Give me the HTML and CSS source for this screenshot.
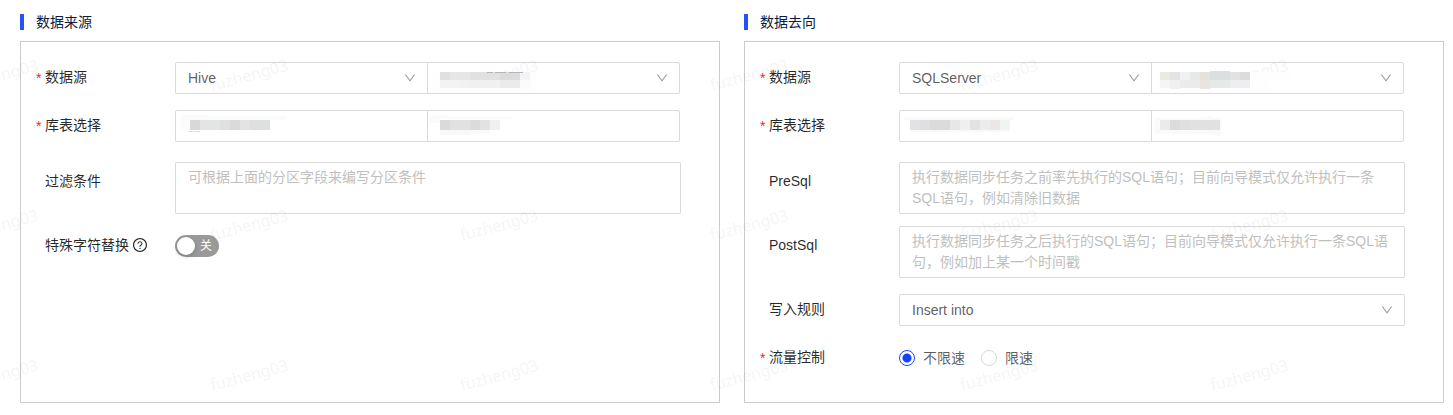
FILE: index.html
```html
<!DOCTYPE html>
<html lang="zh-CN">
<head>
    <meta charset="UTF-8">
    <meta name="viewport" content="width=device-width, initial-scale=1.0">
    <title>数据同步</title>
    <link rel="stylesheet" href="styles.css">
</head>
<body>
    <svg class="defs" width="0" height="0" aria-hidden="true">
        <symbol id="icon-down" viewBox="64 64 896 896">
            <path d="M884 256h-75c-5.1 0-9.9 2.5-12.9 6.6L512 654.2 227.9 262.6c-3-4.1-7.8-6.6-12.9-6.6h-75c-6.5 0-10.3 7.4-6.5 12.7l352.6 486.1c12.8 17.6 39 17.6 51.7 0l352.6-486.1c3.9-5.3.1-12.7-6.4-12.7z"/>
        </symbol>
    </svg>

    <form class="container">
        <section class="column">
            <h2 class="title">数据来源</h2>
            <div class="panel">
                <div class="row">
                    <label class="label required" for="sourceType">数据源</label>
                    <div class="control group">
                        <div class="field">
                            <select id="sourceType"><option>Hive</option></select>
                            <svg class="arrow"><use href="#icon-down"/></svg>
                        </div>
                        <div class="field">
                            <select aria-label="数据源名称"><option></option></select>
                            <svg class="arrow"><use href="#icon-down"/></svg>
                            <svg class="mask" width="120" height="30">
                                <rect x="5" y="10" width="104" height="19" fill="#fefefe"/>
                                <rect x="13" y="10" width="10" height="8" fill="#e0e0e0"/>
                                <rect x="23" y="10" width="20" height="8" fill="#e6e6e6"/>
                                <rect x="43" y="10" width="10" height="8" fill="#dfe1e3"/>
                                <rect x="53" y="10" width="20" height="8" fill="#e3e1e0"/>
                                <rect x="73" y="10" width="20" height="8" fill="#dcdbdb"/>
                                <rect x="93" y="10" width="10" height="8" fill="#f4f4f8"/>
                                <rect x="13" y="18" width="20" height="8" fill="#f3f3f3"/>
                                <rect x="33" y="18" width="10" height="8" fill="#f3f0ef"/>
                                <rect x="43" y="18" width="30" height="8" fill="#f0f0f0"/>
                                <rect x="73" y="18" width="20" height="8" fill="#ebebeb"/>
                                <rect x="93" y="18" width="10" height="9" fill="#fbfbfb"/>
                                <path d="M60 10h6M68 10h11M82 10h14" stroke="#b5b5b8"/>
                            </svg>
                        </div>
                    </div>
                </div>
                <div class="row">
                    <label class="label required" for="sourceDb">库表选择</label>
                    <div class="control group">
                        <div class="field">
                            <input type="text" id="sourceDb">
                            <svg class="mask" width="120" height="30">
                                <path d="M6 5h30v1h76v4H95v10H6z" fill="#fbfbfb"/>
                                <rect x="15" y="10" width="10" height="10" fill="#d8d8d8"/>
                                <rect x="25" y="10" width="20" height="10" fill="#e3e4e4"/>
                                <rect x="45" y="10" width="10" height="10" fill="#dfe0e0"/>
                                <rect x="55" y="10" width="10" height="10" fill="#dadada"/>
                                <rect x="65" y="10" width="10" height="10" fill="#e3e3e4"/>
                                <rect x="75" y="10" width="20" height="10" fill="#dedfdf"/>
                                <path d="M14 21h4M19 21h6" stroke="#dcdcdc"/>
                            </svg>
                        </div>
                        <div class="field">
                            <input type="text" aria-label="表名">
                            <svg class="mask" width="120" height="30">
                                <path d="M3 7l6-2h8l6 2h62v2H13v4H3z" fill="#fbfbfb"/>
                                <rect x="13" y="10" width="10" height="10" fill="#dadada"/>
                                <rect x="23" y="10" width="20" height="10" fill="#e1e1e1"/>
                                <rect x="43" y="10" width="10" height="10" fill="#d9dbdd"/>
                                <rect x="53" y="10" width="10" height="10" fill="#e2e2e2"/>
                                <rect x="63" y="10" width="10" height="10" fill="#eff1f1"/>
                                <rect x="13" y="20" width="30" height="5" fill="#f8f8f8"/>
                                <rect x="43" y="20" width="20" height="4" fill="#fafafa"/>
                            </svg>
                        </div>
                    </div>
                </div>
                <div class="row row-tall">
                    <label class="label" for="filter">过滤条件</label>
                    <div class="control">
                        <textarea id="filter" rows="2" placeholder="可根据上面的分区字段来编写分区条件"></textarea>
                    </div>
                </div>
                <div class="row row-tall">
                    <label class="label" for="replaceChars">特殊字符替换
                        <svg class="help" viewBox="64 64 896 896">
                            <path d="M512 64C264.6 64 64 264.6 64 512s200.6 448 448 448 448-200.6 448-448S759.4 64 512 64zm0 820c-205.4 0-372-166.6-372-372s166.6-372 372-372 372 166.6 372 372-166.6 372-372 372z"/>
                            <path d="M623.6 316.7C593.6 290.4 554 276 512 276s-81.6 14.5-111.6 40.7C369.2 344 352 380.7 352 420v7.6c0 4.4 3.6 8 8 8h48c4.4 0 8-3.6 8-8V420c0-44.1 43.1-80 96-80s96 35.9 96 80c0 31.1-22 59.6-56.1 72.7-21.2 8.1-39.2 22.3-52.1 40.9-13.1 19-19.9 41.8-19.9 64.9V620c0 4.4 3.6 8 8 8h48c4.4 0 8-3.6 8-8v-22.7a48.3 48.3 0 0130.9-44.8c59-22.7 97.1-74.7 97.1-132.5.1-39.3-17.1-76-48.3-103.3zM472 732a40 40 0 1080 0 40 40 0 10-80 0z"/>
                        </svg>
                    </label>
                    <div class="control switch-wrap">
                        <button type="button" class="switch" id="replaceChars" role="switch" aria-checked="false"><span class="knob"></span>关</button>
                    </div>
                </div>
            </div>
        </section>

        <section class="column">
            <h2 class="title">数据去向</h2>
            <div class="panel">
                <div class="row">
                    <label class="label required" for="targetType">数据源</label>
                    <div class="control group">
                        <div class="field">
                            <select id="targetType"><option>SQLServer</option></select>
                            <svg class="arrow"><use href="#icon-down"/></svg>
                        </div>
                        <div class="field">
                            <select aria-label="数据源名称"><option></option></select>
                            <svg class="arrow"><use href="#icon-down"/></svg>
                            <svg class="mask" width="145" height="30">
                                <rect x="5" y="10" width="134" height="8" fill="#fefefe"/>
                                <rect x="5" y="18" width="114" height="11" fill="#fefefe"/>
                                <rect x="9" y="10" width="10" height="8" fill="#ebe9e3"/>
                                <rect x="19" y="10" width="10" height="8" fill="#e1e4e3"/>
                                <rect x="29" y="10" width="10" height="8" fill="#f0f1f4"/>
                                <rect x="39" y="10" width="10" height="8" fill="#e7e9e9"/>
                                <rect x="49" y="10" width="10" height="8" fill="#e6e1d9"/>
                                <rect x="59" y="9" width="20" height="9" fill="#dadfdf"/>
                                <rect x="79" y="10" width="10" height="8" fill="#e3e1e1"/>
                                <rect x="89" y="10" width="10" height="8" fill="#dcdce0"/>
                                <rect x="9" y="18" width="10" height="8" fill="#f5f5f5"/>
                                <rect x="19" y="18" width="10" height="9" fill="#edf0ef"/>
                                <rect x="29" y="18" width="20" height="8" fill="#ebebeb"/>
                                <rect x="49" y="18" width="10" height="9" fill="#e9e4df"/>
                                <rect x="59" y="18" width="20" height="8" fill="#e5e9e8"/>
                                <rect x="79" y="18" width="20" height="8" fill="#eeeef0"/>
                            </svg>
                        </div>
                    </div>
                </div>
                <div class="row">
                    <label class="label required" for="targetDb">库表选择</label>
                    <div class="control group">
                        <div class="field">
                            <input type="text" id="targetDb">
                            <svg class="mask" width="120" height="30">
                                <path d="M5 7h109v3h-3v12H11V10H5z" fill="#f9f9f9"/>
                                <rect x="11" y="10" width="10" height="10" fill="#e3e2e2"/>
                                <rect x="21" y="10" width="10" height="10" fill="#dedfe2"/>
                                <rect x="31" y="10" width="20" height="10" fill="#dcdbdb"/>
                                <rect x="51" y="10" width="10" height="10" fill="#e6e7e9"/>
                                <rect x="61" y="10" width="10" height="10" fill="#efeff0"/>
                                <rect x="71" y="10" width="10" height="10" fill="#e5e3e2"/>
                                <rect x="81" y="10" width="10" height="10" fill="#ebecee"/>
                                <rect x="91" y="10" width="10" height="10" fill="#eae7e5"/>
                                <rect x="101" y="10" width="10" height="10" fill="#f2f3f3"/>
                            </svg>
                        </div>
                        <div class="field">
                            <input type="text" aria-label="表名">
                            <svg class="mask" width="120" height="30">
                                <path d="M4 8h48l6-2 7 2h5v19l-10-3H4z" fill="#fafafa"/>
                                <rect x="9" y="10" width="10" height="10" fill="#ebebec"/>
                                <rect x="19" y="10" width="10" height="10" fill="#dcdcdc"/>
                                <rect x="29" y="10" width="10" height="10" fill="#dfdfdf"/>
                                <rect x="39" y="10" width="30" height="10" fill="#e1e1e1"/>
                            </svg>
                        </div>
                    </div>
                </div>
                <div class="row row-tall">
                    <label class="label" for="preSql">PreSql</label>
                    <div class="control">
                        <textarea id="preSql" rows="2" placeholder="执行数据同步任务之前率先执行的SQL语句；目前向导模式仅允许执行一条SQL语句，例如清除旧数据"></textarea>
                    </div>
                </div>
                <div class="row row-tall">
                    <label class="label" for="postSql">PostSql</label>
                    <div class="control">
                        <textarea id="postSql" rows="2" placeholder="执行数据同步任务之后执行的SQL语句；目前向导模式仅允许执行一条SQL语句，例如加上某一个时间戳"></textarea>
                    </div>
                </div>
                <div class="row">
                    <label class="label" for="writeRule">写入规则</label>
                    <div class="control field">
                        <select id="writeRule"><option>Insert into</option></select>
                        <svg class="arrow"><use href="#icon-down"/></svg>
                    </div>
                </div>
                <div class="row">
                    <span class="label required" id="limitLabel">流量控制</span>
                    <div class="control radios" role="radiogroup" aria-labelledby="limitLabel">
                        <label class="radio"><input type="radio" name="limit" checked>不限速</label>
                        <label class="radio"><input type="radio" name="limit">限速</label>
                    </div>
                </div>
            </div>
        </section>
    </form>

    <svg class="watermark" aria-hidden="true">
        <pattern id="mark" x="200" y="50" width="250" height="150" patternUnits="userSpaceOnUse">
            <text x="12" y="41" transform="rotate(-15 12 41)">fuzheng03</text>
        </pattern>
        <rect width="100%" height="100%" fill="url(#mark)"/>
    </svg>
</body>
</html>
```
FILE: styles.css
```css
* {
    box-sizing: border-box;
}
body {
    margin: 0;
    padding: 12px 9px 12px 20px;
    background: #fff;
    color: rgba(0, 0, 0, 0.85);
    font-family: "Liberation Sans", "Noto Sans CJK SC", sans-serif;
    font-size: 14px;
    line-height: 20px;
}
.defs {
    position: absolute;
}
.container {
    display: grid;
    grid-template-columns: 1fr 1fr;
    gap: 24px;
}
.column {
    display: flex;
    flex-direction: column;
}
.title {
    display: flex;
    align-items: center;
    gap: 12px;
    margin: 0 0 9px;
    color: #0b1a40;
    font-size: 14px;
    font-weight: 400;
    line-height: 20px;
}
.title::before {
    content: "";
    width: 4px;
    height: 16px;
    background: #2254f4;
}
.panel {
    flex: 1;
    padding: 20px 38px 12px 15px;
    border: 1px solid #ccc;
}

/* form rows */
.row {
    display: flex;
    margin-bottom: 16px;
}
.row-tall {
    min-height: 64px;
    margin-bottom: 0;
    padding: 4px 0 8px;
}
.row-tall + .row:not(.row-tall) {
    margin-top: 8px;
}
.label {
    display: flex;
    align-items: center;
    width: 139px;
    height: 30px;
    padding-left: 9px;
}
.row-tall .label {
    height: 38px;
}
.required {
    padding-left: 0;
}
.required::before {
    content: "*";
    width: 9px;
    padding-top: 2px;
    color: #f5222d;
}
.help {
    width: 14px;
    height: 14px;
    margin-left: 4px;
    fill: rgba(0, 0, 0, 0.85);
}
.control {
    flex: 1;
    min-width: 0;
}
.group {
    display: flex;
    padding-right: 1px;
}
.field {
    position: relative;
    flex: 1;
}
.field + .field {
    margin-left: -1px;
}

input[type="text"], select, textarea {
    display: block;
    width: 100%;
    height: 32px;
    margin: 0;
    padding: 0 12px;
    border: 1px solid #d9d9d9;
    border-radius: 2px;
    outline: none;
    background: #fff;
    color: rgba(0, 0, 0, 0.65);
    font: inherit;
}
select {
    appearance: none;
    cursor: pointer;
}
textarea {
    height: auto;
    padding: 4px 12px;
    line-height: 21px;
    resize: none;
}
textarea::placeholder {
    color: #bfbfbf;
}
.group .field:first-child > input, .group .field:first-child > select {
    border-radius: 2px 0 0 2px;
}
.group .field:last-child > input, .group .field:last-child > select {
    border-radius: 0 2px 2px 0;
}
.arrow {
    position: absolute;
    top: 10px;
    right: 12px;
    width: 12px;
    height: 12px;
    fill: rgba(0, 0, 0, 0.4);
    pointer-events: none;
}
.mask {
    position: absolute;
    top: 0;
    left: 0;
    z-index: 2;
    shape-rendering: crispEdges;
    pointer-events: none;
}

/* switch */
.switch-wrap {
    display: flex;
    align-items: center;
    height: 40px;
}
.switch {
    display: flex;
    align-items: center;
    gap: 5px;
    width: 44px;
    height: 22px;
    padding: 0 2px;
    border: none;
    border-radius: 11px;
    background: #999;
    color: #fff;
    font: inherit;
    font-size: 12px;
    cursor: pointer;
}
.knob {
    width: 18px;
    height: 18px;
    border-radius: 50%;
    background: #fff;
    box-shadow: 0 2px 4px rgba(0, 35, 11, 0.2);
}

/* radios */
.radios {
    display: flex;
    align-items: center;
    gap: 16px;
    height: 32px;
    color: rgba(0, 0, 0, 0.65);
}
.radio {
    display: flex;
    align-items: center;
    gap: 8px;
}
.radio input {
    appearance: none;
    width: 16px;
    height: 16px;
    margin: 0;
    border: 1px solid #d9d9d9;
    border-radius: 50%;
    background: #fff;
}
.radio input:checked {
    border-color: #1c49f2;
    background: radial-gradient(circle, #1440ff 4px, #fff 5px);
}

.watermark {
    position: fixed;
    top: 0;
    left: 0;
    z-index: 1;
    width: 100%;
    height: 100%;
    fill: rgba(0, 0, 0, 0.04);
    font-family: "Noto Sans", sans-serif;
    font-size: 16px;
    pointer-events: none;
}
```
